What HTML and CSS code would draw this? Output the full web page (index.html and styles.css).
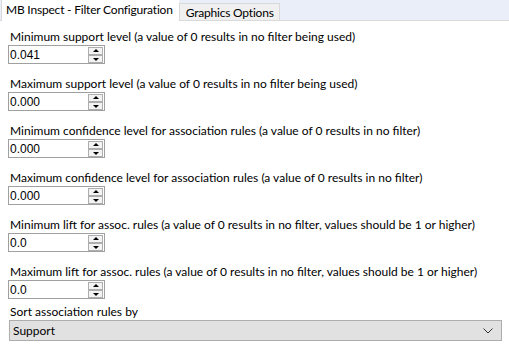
FILE: index.html
```html
<!DOCTYPE html>
<html lang="en">
<head>
  <meta charset="UTF-8">
  <title>MB Inspect</title>
  <link rel="stylesheet" href="styles.css">
</head>
<body>
<div class="tabs">
  <div class="tab active">MB Inspect - Filter Configuration</div>
  <div class="tab">Graphics Options</div>
</div>
<div class="panel">
  <div class="field">
    <label>Minimum support level (a value of 0 results in no filter being used)</label>
    <div class="spin"><span class="val">0.041</span><span class="btns"><span class="up"></span><span class="down"></span></span></div>
  </div>
  <div class="field">
    <label>Maximum support level (a value of 0 results in no filter being used)</label>
    <div class="spin"><span class="val">0.000</span><span class="btns"><span class="up"></span><span class="down"></span></span></div>
  </div>
  <div class="field">
    <label>Minimum confidence level for association rules (a value of 0 results in no filter)</label>
    <div class="spin"><span class="val">0.000</span><span class="btns"><span class="up"></span><span class="down"></span></span></div>
  </div>
  <div class="field">
    <label>Maximum confidence level for association rules (a value of 0 results in no filter)</label>
    <div class="spin"><span class="val">0.000</span><span class="btns"><span class="up"></span><span class="down"></span></span></div>
  </div>
  <div class="field">
    <label>Minimum lift for assoc. rules (a value of 0 results in no filter, values should be 1 or higher)</label>
    <div class="spin"><span class="val">0.0</span><span class="btns"><span class="up"></span><span class="down"></span></span></div>
  </div>
  <div class="field last">
    <label>Maximum lift for assoc. rules (a value of 0 results in no filter, values should be 1 or higher)</label>
    <div class="spin"><span class="val">0.0</span><span class="btns"><span class="up"></span><span class="down"></span></span></div>
  </div>
  <div class="field sort">
    <label>Sort association rules by</label>
    <div class="combo"><span>Support</span>
      <svg width="10" height="6" viewBox="0 0 10 6"><path d="M0.5 0.5 L5 5 L9.5 0.5" fill="none" stroke="#333" stroke-width="1"/></svg>
    </div>
  </div>
</div>
</body>
</html>
```

FILE: styles.css
```css
body {
    margin: 0;
    background: #fff;
    font-family: Lato, "Noto Sans", sans-serif;
    font-size: 12px;
    color: #000;
    width: 509px;
    height: 347px;
    overflow: hidden;
}

.tabs {
    display: flex;
    align-items: flex-end;
    height: 20px;
    background: #eaeef8;
    border-bottom: 1px solid #d9d9d9;
    padding-left: 1px;
}

.tab {
    height: 17px;
    line-height: 17px;
    padding: 0 5px 0 6px;
    background: #f0f0f0;
    border: 1px solid #d9d9d9;
    border-bottom: none;
    box-sizing: border-box;
    letter-spacing: -0.2px;
}

.tab.active {
    height: 22px;
    margin-bottom: -1px;
    line-height: 20px;
    background: #fff;
    border-color: #fff;
    border-left-color: #d9d9d9;
    padding: 0 5px 0 4px;
}

.panel {
    padding: 7px 8px 0 8px;
}

.field {
    height: 47px;
}

.field.last {
    height: 41px;
}

.field label {
    display: block;
    padding-left: 2px;
    height: 17px;
    line-height: 17px;
    white-space: nowrap;
}

.spin {
    display: flex;
    justify-content: space-between;
    align-items: center;
    width: 97px;
    height: 19px;
    border: 1px solid #a0a0a0;
    box-sizing: border-box;
    background: #fff;
}

.val {
    font-family: "Liberation Sans", Arial, sans-serif;
    font-size: 12px;
    padding-left: 1px;
}

.btns {
    display: flex;
    flex-direction: column;
    margin-right: 1px;
}

.btns span {
    width: 15px;
    height: 8px;
    box-sizing: border-box;
    border: 1px solid #adadad;
    background: #f3f3f3;
    position: relative;
}

.btns span::after {
    content: "";
    position: absolute;
    left: 4px;
    border-left: 3px solid transparent;
    border-right: 3px solid transparent;
}

.btns .up::after {
    top: 1px;
    border-bottom: 3px solid #000;
}

.btns .down::after {
    top: 2px;
    border-top: 3px solid #000;
}

.sort label {
    height: 16px;
    line-height: 16px;
}

.combo {
    display: flex;
    justify-content: space-between;
    align-items: center;
    width: 493px;
    height: 21px;
    margin-left: 1px;
    box-sizing: border-box;
    border: 1px solid #adadad;
    background: #e1e1e1;
    padding: 0 8px 0 3px;
}
```
